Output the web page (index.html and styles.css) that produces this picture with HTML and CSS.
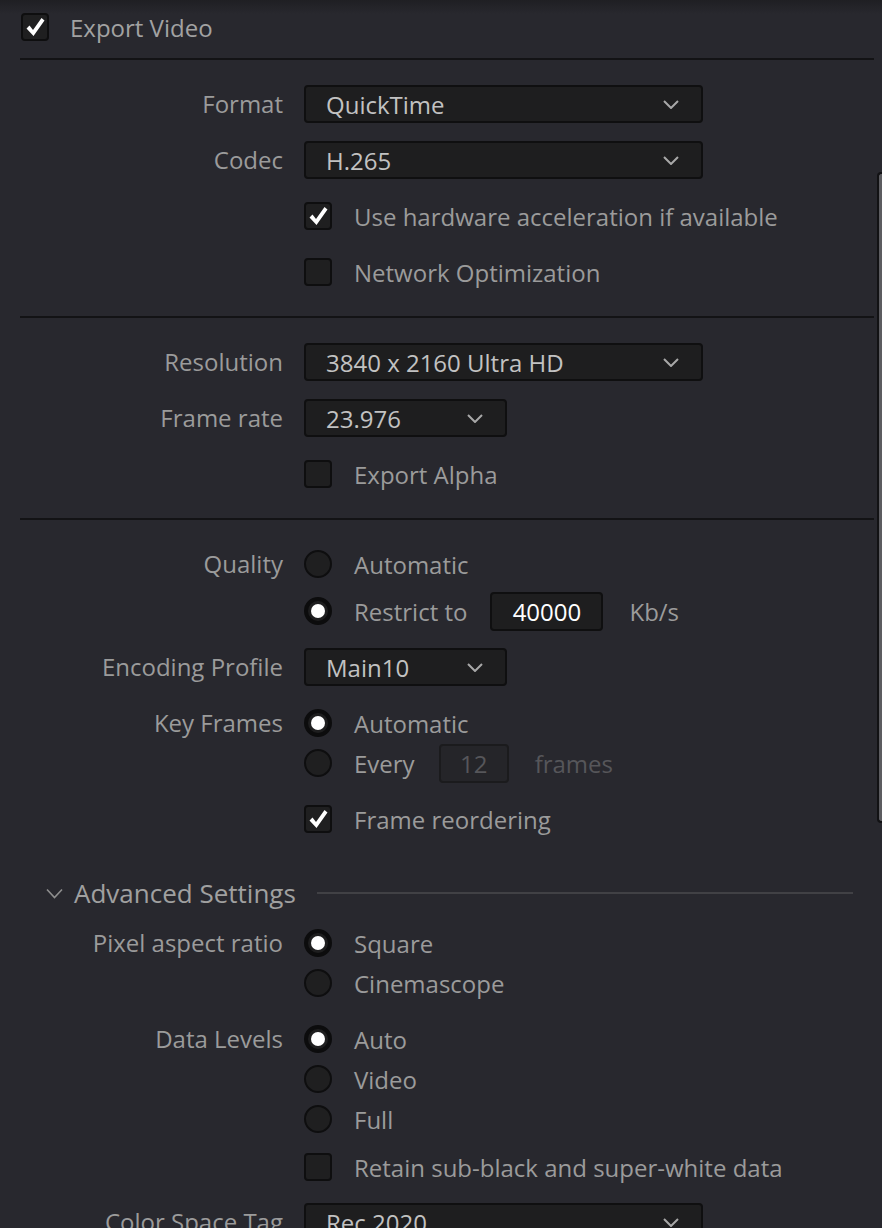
FILE: index.html
```html
<!DOCTYPE html>
<html lang="en">
<head>
<meta charset="utf-8">
<title>Export Video</title>
<link rel="stylesheet" href="styles.css">
</head>
<body>
<div class="panel">
  <div class="header">
    <span class="cb on"><svg viewBox="2 2 24 24"><path d="M5.5 15.5 L8.5 12.5 L12 17 L20.5 5 L23.5 7.5 L12.5 23 Z"/></svg></span>
    <span class="header-title">Export Video</span>
  </div>

  <section class="group">
    <div class="field">
      <div class="label">Format</div>
      <div class="controls"><div class="select wide"><span>QuickTime</span><svg class="chev" viewBox="0 0 16 9"><polyline points="1,1 8,8 15,1"/></svg></div></div>
    </div>
    <div class="field">
      <div class="label">Codec</div>
      <div class="controls"><div class="select wide"><span>H.265</span><svg class="chev" viewBox="0 0 16 9"><polyline points="1,1 8,8 15,1"/></svg></div></div>
    </div>
    <div class="field">
      <div class="label"></div>
      <div class="controls"><div class="opt"><span class="cb on"><svg viewBox="2 2 24 24"><path d="M5.5 15.5 L8.5 12.5 L12 17 L20.5 5 L23.5 7.5 L12.5 23 Z"/></svg></span><span>Use hardware acceleration if available</span></div></div>
    </div>
    <div class="field">
      <div class="label"></div>
      <div class="controls"><div class="opt"><span class="cb"></span><span>Network Optimization</span></div></div>
    </div>
  </section>

  <section class="group">
    <div class="field">
      <div class="label">Resolution</div>
      <div class="controls"><div class="select wide"><span>3840 x 2160 Ultra HD</span><svg class="chev" viewBox="0 0 16 9"><polyline points="1,1 8,8 15,1"/></svg></div></div>
    </div>
    <div class="field">
      <div class="label">Frame rate</div>
      <div class="controls"><div class="select narrow"><span>23.976</span><svg class="chev" viewBox="0 0 16 9"><polyline points="1,1 8,8 15,1"/></svg></div></div>
    </div>
    <div class="field">
      <div class="label"></div>
      <div class="controls"><div class="opt"><span class="cb"></span><span>Export Alpha</span></div></div>
    </div>
  </section>

  <section class="group last">
    <div class="field">
      <div class="label">Quality</div>
      <div class="controls quality">
        <div class="opt"><span class="radio"></span><span>Automatic</span></div>
        <div class="opt"><span class="radio on"></span><span>Restrict to</span><span class="num">40000</span><span class="unit">Kb/s</span></div>
      </div>
    </div>
    <div class="field">
      <div class="label">Encoding Profile</div>
      <div class="controls"><div class="select narrow"><span>Main10</span><svg class="chev" viewBox="0 0 16 9"><polyline points="1,1 8,8 15,1"/></svg></div></div>
    </div>
    <div class="field">
      <div class="label">Key Frames</div>
      <div class="controls">
        <div class="opt"><span class="radio on"></span><span>Automatic</span></div>
        <div class="opt"><span class="radio"></span><span>Every</span><span class="num small disabled">12</span><span class="unit disabled">frames</span></div>
      </div>
    </div>
    <div class="field">
      <div class="label"></div>
      <div class="controls"><div class="opt"><span class="cb on"><svg viewBox="2 2 24 24"><path d="M5.5 15.5 L8.5 12.5 L12 17 L20.5 5 L23.5 7.5 L12.5 23 Z"/></svg></span><span>Frame reordering</span></div></div>
    </div>
  </section>

  <section class="advanced">
    <div class="adv-header">
      <svg class="adv-chev" viewBox="0 0 17 11"><polyline points="1,1.5 8.5,9.5 16,1.5"/></svg>
      <span class="adv-title">Advanced Settings</span>
      <span class="adv-line"></span>
    </div>
    <div class="field">
      <div class="label">Pixel aspect ratio</div>
      <div class="controls">
        <div class="opt"><span class="radio on"></span><span>Square</span></div>
        <div class="opt"><span class="radio"></span><span>Cinemascope</span></div>
      </div>
    </div>
    <div class="field spaced">
      <div class="label">Data Levels</div>
      <div class="controls">
        <div class="opt"><span class="radio on"></span><span>Auto</span></div>
        <div class="opt"><span class="radio"></span><span>Video</span></div>
        <div class="opt"><span class="radio"></span><span>Full</span></div>
      </div>
    </div>
    <div class="field">
      <div class="label"></div>
      <div class="controls"><div class="opt"><span class="cb"></span><span>Retain sub-black and super-white data</span></div></div>
    </div>
    <div class="field spaced-sm">
      <div class="label">Color Space Tag</div>
      <div class="controls"><div class="select wide"><span>Rec.2020</span><svg class="chev" viewBox="0 0 16 9"><polyline points="1,1 8,8 15,1"/></svg></div></div>
    </div>
  </section>

  <div class="scrollbar"></div>
</div>
</body>
</html>
```

FILE: styles.css
```css
html, body {
  margin: 0;
  padding: 0;
}

body {
  background: #28282e;
  font-family: "Open Sans", "Noto Sans", sans-serif;
  font-size: 24px;
  color: #9b9b9b;
}

.panel {
  position: relative;
  height: 1228px;
  overflow: hidden;
  box-sizing: border-box;
  padding: 0 8px 0 20px;
  background: linear-gradient(#1f1f23 0px, #28282e 14px);
}

.header {
  display: flex;
  align-items: center;
  gap: 21px;
  height: 54px;
  margin-bottom: 4px;
  padding-left: 1px;
}

.header-title {
  color: #a2a2a2;
}

.group {
  display: flex;
  flex-direction: column;
  gap: 16px;
  border-top: 2px solid #131315;
  padding: 24px 0 24px;
}

.group.last {
  padding-bottom: 34px;
}

.field {
  display: grid;
  grid-template-columns: 263px 1fr;
  column-gap: 21px;
  align-items: start;
}

.label {
  height: 40px;
  line-height: 40px;
  text-align: right;
  white-space: nowrap;
}

.controls {
  display: flex;
  flex-direction: column;
}

.controls.quality {
  gap: 7px;
}

.opt {
  display: flex;
  align-items: center;
  height: 40px;
  gap: 22px;
  white-space: nowrap;
}

.select {
  box-sizing: border-box;
  height: 38px;
  margin-top: 1px;
  display: flex;
  align-items: center;
  justify-content: space-between;
  padding: 0 22px 0 20px;
  background: #1e1e1f;
  border: 2px solid #0f0f10;
  border-radius: 4px;
  color: #c2c2c2;
  white-space: nowrap;
}

.select.wide {
  width: 399px;
}

.select.narrow {
  width: 203px;
}

.chev {
  width: 16px;
  height: 9px;
  fill: none;
  stroke: #a8a8a8;
  stroke-width: 2;
}

.cb {
  box-sizing: border-box;
  width: 28px;
  height: 28px;
  flex: none;
  background: #1f1f20;
  border: 2px solid #0e0e0f;
  border-radius: 4px;
  display: flex;
  align-items: center;
  justify-content: center;
}

.cb svg {
  width: 24px;
  height: 24px;
  flex: none;
  fill: #ffffff;
}

.radio {
  box-sizing: border-box;
  width: 28px;
  height: 28px;
  flex: none;
  border-radius: 50%;
  background: #1f1f20;
  border: 2px solid #0e0e0f;
  display: flex;
  align-items: center;
  justify-content: center;
}

.radio.on {
  border: 4px solid #0c0c0d;
  background: #1e1e1f;
}

.radio.on::after {
  content: "";
  width: 14px;
  height: 14px;
  border-radius: 50%;
  background: #ffffff;
}

.num {
  box-sizing: border-box;
  width: 113px;
  height: 39px;
  display: flex;
  align-items: center;
  justify-content: center;
  background: #1e1e1f;
  border: 2px solid #0f0f10;
  border-radius: 4px;
  color: #ffffff;
  margin-left: 1px;
}

.num.small {
  width: 70px;
  margin-left: 2px;
}

.num.disabled {
  background: #252529;
  border-color: #1b1b1d;
  color: #56565a;
}

.unit {
  margin-left: 4px;
}

.unit.disabled {
  color: #56565a;
}

.advanced {
  display: flex;
  flex-direction: column;
  gap: 8px;
}

.adv-header {
  display: flex;
  align-items: center;
  height: 40px;
  padding-left: 26px;
  margin-bottom: 2px;
}

.adv-chev {
  width: 17px;
  height: 11px;
  fill: none;
  stroke: #8e8e8e;
  stroke-width: 1.6;
  margin-right: 11px;
}

.adv-title {
  font-size: 26px;
  color: #a0a0a0;
  white-space: nowrap;
}

.adv-line {
  flex: 1;
  height: 2px;
  background: #414145;
  margin: 0 21px 0 21px;
}

.field.spaced {
  margin-top: 8px;
}

.field.spaced-sm {
  margin-top: 7px;
}

.scrollbar {
  position: absolute;
  top: 172px;
  left: 877px;
  width: 5px;
  height: 651px;
  box-sizing: border-box;
  background: #5c5c60;
  border: 2px solid #121214;
  border-right: none;
  border-radius: 4px 0 0 4px;
}
```
